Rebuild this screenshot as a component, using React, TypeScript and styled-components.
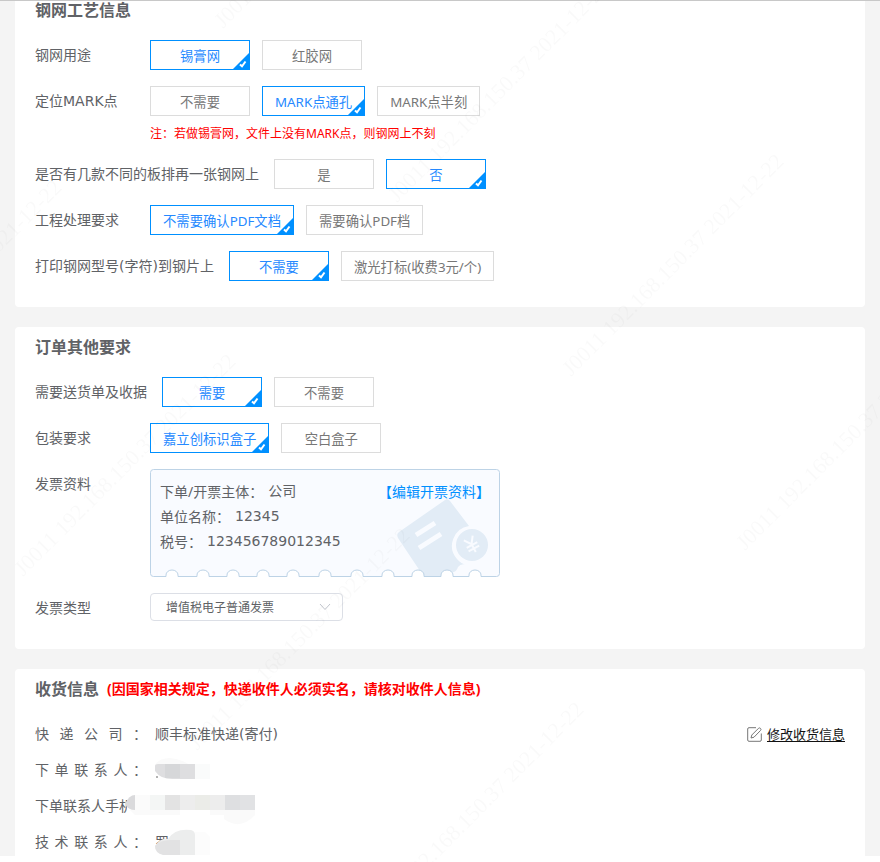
import React, { useState } from "react";
import styled, { createGlobalStyle } from "styled-components";

const GlobalStyle = createGlobalStyle`
  * { box-sizing: border-box; }
  body {
    margin: 0;
    background: #fff;
    color: #606266;
    font-family: "Noto Sans", "Noto Sans CJK SC", sans-serif;
    font-size: 14px;
    line-height: 20px;
  }
`;

const Page = styled.main`
  display: flex;
  flex-direction: column;
  gap: 20px;
  padding: 0 15px;
  background: #f4f4f4;
`;

const TopLine = styled.div`
  position: fixed;
  inset: 0 0 auto;
  height: 1px;
  background: #c8c8c8;
`;

const Card = styled.section<{ $place?: "first" | "last" }>`
  padding: ${(p) =>
    p.$place === "first" ? "0 20px 26px" : p.$place === "last" ? "10px 20px 4px" : "10px 20px 26px"};
  border-radius: ${(p) =>
    p.$place === "first" ? "0 0 4px 4px" : p.$place === "last" ? "4px 4px 0 0" : "4px"};
  background: #fff;
`;

const Title = styled.h2<{ $gap?: number }>`
  display: flex;
  align-items: center;
  gap: 8px;
  margin: 0 0 ${(p) => p.$gap ?? 20}px;
  font-size: 16px;
  font-weight: 700;
  line-height: 20px;
`;

const Warning = styled.span`
  color: #f00;
  font-size: 14px;
`;

const Rows = styled.div`
  display: flex;
  flex-direction: column;
  gap: 16px;
`;

const Row = styled.div`
  display: flex;
  align-items: flex-start;
  gap: 15px;
  min-height: 30px;
`;

const RowLabel = styled.label`
  min-width: 100px;
  font-family: "DejaVu Sans", "Noto Sans CJK SC", sans-serif;
  line-height: 30px;
  white-space: nowrap;
`;

const Options = styled.div`
  display: flex;
  flex-wrap: wrap;
  gap: 12px;
`;

const Option = styled.button<{ $on: boolean }>`
  position: relative;
  min-width: 100px;
  height: 30px;
  padding: 0 12px;
  border: 1px solid ${(p) => (p.$on ? "#0090ff" : "#dcdcdc")};
  background: #fff;
  color: ${(p) => (p.$on ? "#2589ff" : "#777")};
  font-family: inherit;
  white-space: nowrap;
  cursor: pointer;
`;

const Corner = styled.svg`
  position: absolute;
  right: 0;
  bottom: 0;
  width: 16px;
  height: 17px;
`;

const Note = styled.p`
  margin: 9px 0 0;
  color: #f00;
  font-size: 12px;
  line-height: 18px;
`;

const Invoice = styled.div`
  position: relative;
  width: 350px;
  height: 108px;
  padding: 10px;
  line-height: 25px;
`;

const InvoiceArt = styled.svg`
  position: absolute;
  inset: 0;
`;

const InvoiceLine = styled.div`
  position: relative;
  display: flex;
  gap: 5px;
`;

const InvoiceValue = styled.span`
  font-family: "DejaVu Sans", "Noto Sans CJK SC", sans-serif;
`;

const EditInvoice = styled.a`
  margin-left: auto;
  color: #0090ff;
  text-decoration: none;
`;

const SelectBox = styled.div`
  position: relative;
  width: 193px;
  height: 28px;
`;

const Select = styled.select`
  width: 100%;
  height: 100%;
  padding: 0 30px 0 15px;
  border: 1px solid #dcdfe6;
  border-radius: 4px;
  appearance: none;
  background: #fff;
  color: #606266;
  font-family: inherit;
  font-size: 12px;
`;

const Chevron = styled.svg`
  position: absolute;
  top: 10px;
  right: 12px;
  pointer-events: none;
`;

const Contact = styled.div`
  position: relative;
  display: flex;
  gap: 8px;
  height: 20px;
`;

const ContactLabel = styled.span`
  width: 112px;
  white-space: nowrap;
  text-align-last: justify;
`;

const PhoneLabel = styled(ContactLabel)`
  text-align-last: left;
`;

const ContactValue = styled.span`
  font-family: "DejaVu Sans", "Noto Sans CJK SC", sans-serif;
`;

const Mosaic = styled.svg`
  position: absolute;
  top: -5px;
  left: 90px;
`;

const EditAddress = styled.a`
  display: flex;
  align-items: center;
  gap: 5px;
  margin-left: auto;
  color: #111;
  font-size: 13px;
  text-decoration: underline;
  text-underline-offset: 2px;
`;

const WatermarkLayer = styled.div`
  position: fixed;
  inset: 0;
  overflow: hidden;
  pointer-events: none;
`;

const Mark = styled.span<{ $x: number; $y: number }>`
  position: absolute;
  left: ${(p) => p.$x}px;
  top: ${(p) => p.$y}px;
  color: rgba(0, 0, 0, 0.024);
  font-family: "Liberation Serif", serif;
  font-size: 22px;
  line-height: 22px;
  white-space: nowrap;
  transform: rotate(-45deg);
  transform-origin: 0 50%;
`;

function Choice({ label, items, initial, note }: { label: string; items: string[]; initial: number; note?: string }) {
  const [current, setCurrent] = useState(initial);
  return (
    <Row role="group" aria-label={label}>
      <RowLabel as="span">{label}</RowLabel>
      <div>
        <Options>
          {items.map((item, i) => (
            <Option key={item} type="button" $on={i === current} aria-pressed={i === current} onClick={() => setCurrent(i)}>
              {item}
              {i === current && (
                <Corner viewBox="0 0 16 17" aria-hidden="true">
                  <path d="M16 1V17H0Z" fill="#0090ff" />
                  <path d="M7 12.500 9 14.300 12.500 9.500" fill="none" stroke="#fff" strokeWidth="2" />
                </Corner>
              )}
            </Option>
          ))}
        </Options>
        {note && <Note>{note}</Note>}
      </div>
    </Row>
  );
}

const notches = [325, 297, 268, 238, 207, 175, 143, 113, 83, 53, 22];
const ticketPath =
  "M3.5 .5H346.5Q349.5 .5 349.5 3.5V104.500Q349.5 107.5 346.500 107.5" +
  notches.map((x) => `H${x + 6}V106A6 5 0 0 0 ${x - 6} 106V107.5`).join("") +
  "H3.5Q.5 107.5 .5 104.5V3.5Q.5 .5 3.5 .5Z";

function TicketArt() {
  return (
    <InvoiceArt width="350" height="108" viewBox="0 0 350 108" aria-hidden="true">
      <defs>
        <clipPath id="ticket">
          <path d={ticketPath} />
        </clipPath>
      </defs>
      <path d={ticketPath} fill="#f9fbff" />
      <g clipPath="url(#ticket)">
        <path
          d="M249 63 295 31Q298 29 300 32L319 57A20 20 0 0 0 307 90Q311 95 317 96Q311 94 308 98Q306 105 299 103Q293 102 291 108H274L248 69Q246 65 249 63Z"
          fill="#e2ecf6"
        />
        <circle cx="322" cy="76" r="16" fill="#e2ecf6" />
        <path d="M266 66 285 54M269 79 291 65" stroke="#f9fbff" strokeWidth="5" />
        <path
          d="M317 68 322 75 327 68M322 75V84M316 76H328M316 80H328"
          transform="rotate(-28 322 76)"
          fill="none"
          stroke="#f9fbff"
          strokeWidth="2"
        />
      </g>
      <path d={ticketPath} fill="none" stroke="#bdd3e6" />
    </InvoiceArt>
  );
}

function EditIcon() {
  return (
    <svg width="15" height="15" viewBox="0 0 15 15" fill="none" stroke="#777" aria-hidden="true">
      <path d="M9 .7H2Q.7 .7 .7 2V13Q.7 14.300 2 14.300H13Q14.300 14.300 14.300 13V6.500" />
      <path d="M4 11 4.800 8 11.500 1.300Q12.500 .4 13.500 1.400Q14.500 2.400 13.600 3.400L7 10.200Z" />
    </svg>
  );
}

const marks = [
  [218, 30],
  [392, 204],
  [566, 378],
  [740, 552],
  [-156, 404],
  [18, 578],
  [192, 752],
  [366, 926],
].map(([x, y]) => ({ x, y: y - 17 }));

export default function App() {
  return (
    <>
      <GlobalStyle />
      <Page>
        <Card $place="first">
          <Title>钢网工艺信息</Title>
          <Rows>
            <Choice label="钢网用途" items={["锡膏网", "红胶网"]} initial={0} />
            <Choice
              label="定位MARK点"
              items={["不需要", "MARK点通孔", "MARK点半刻"]}
              initial={1}
              note="注：若做锡膏网，文件上没有MARK点，则钢网上不刻"
            />
            <Choice label="是否有几款不同的板排再一张钢网上" items={["是", "否"]} initial={1} />
            <Choice label="工程处理要求" items={["不需要确认PDF文档", "需要确认PDF档"]} initial={0} />
            <Choice label="打印钢网型号(字符)到钢片上" items={["不需要", "激光打标(收费3元/个)"]} initial={0} />
          </Rows>
        </Card>

        <Card>
          <Title>订单其他要求</Title>
          <Rows>
            <Choice label="需要送货单及收据" items={["需要", "不需要"]} initial={0} />
            <Choice label="包装要求" items={["嘉立创标识盒子", "空白盒子"]} initial={0} />
            <Row>
              <RowLabel as="span">发票资料</RowLabel>
              <Invoice>
                <TicketArt />
                <InvoiceLine>
                  <span>下单/开票主体：</span>
                  <InvoiceValue>公司</InvoiceValue>
                  <EditInvoice href="#invoice">【编辑开票资料】</EditInvoice>
                </InvoiceLine>
                <InvoiceLine>
                  <span>单位名称：</span>
                  <InvoiceValue>12345</InvoiceValue>
                </InvoiceLine>
                <InvoiceLine>
                  <span>税号：</span>
                  <InvoiceValue>123456789012345</InvoiceValue>
                </InvoiceLine>
              </Invoice>
            </Row>
            <Row>
              <RowLabel htmlFor="invoice-type">发票类型</RowLabel>
              <SelectBox>
                <Select id="invoice-type">
                  <option>增值税电子普通发票</option>
                </Select>
                <Chevron width="12" height="8" viewBox="0 0 12 8" fill="none" stroke="#c0c4cc" aria-hidden="true">
                  <path d="M1 1 6 6.500 11 1" />
                </Chevron>
              </SelectBox>
            </Row>
          </Rows>
        </Card>

        <Card $place="last">
          <Title $gap={25}>
            收货信息
            <Warning>(因国家相关规定，快递收件人必须实名，请核对收件人信息)</Warning>
          </Title>
          <Rows>
            <Contact>
              <ContactLabel>快递公司：</ContactLabel>
              <ContactValue>顺丰标准快递(寄付)</ContactValue>
              <EditAddress href="#address">
                <EditIcon />
                修改收货信息
              </EditAddress>
            </Contact>
            <Contact>
              <ContactLabel>下单联系人：</ContactLabel>
              <Mosaic width="130" height="32" aria-hidden="true">
                <path d="M30 10Q34 3 45 3Q56 4 65 10Z" fill="#fafafa" />
                <path d="M31 12h3M31 22h2" stroke="#666" />
                <path d="M30 11Q30 9 33 9H70V24H50Q36 25 30 16Z" fill="#dedee0" />
                <path d="M40 9h15v14H40z" fill="#d6d7d9" />
                <path d="M70 9h15v15H70z" fill="#fafbfb" />
              </Mosaic>
            </Contact>
            <Contact>
              <PhoneLabel>下单联系人手机</PhoneLabel>
              <Mosaic width="130" height="36" aria-hidden="true">
                <path d="M2 4H12V26H2Z" fill="#fff" />
                <path d="M0 13Q4 4 10 4V19Q3 19 0 13Z" fill="#dadadc" />
                <path d="M10 4h15v15H10z" fill="#fbfbfb" />
                <path d="M25 4h15v15H25z" fill="#f4f6f5" />
                <path d="M40 4h15v15H40z" fill="#e3e3e3" />
                <path d="M55 4h15v15H55z" fill="#ededed" />
                <path d="M70 4h15v15H70z" fill="#ebece8" />
                <path d="M85 4h15v15H85z" fill="#ededed" />
                <path d="M100 4h15v15H100z" fill="#dedfe1" />
                <path d="M115 4h15v15H115z" fill="#e1e2e4" />
                <path d="M5 19H55V24H10ZM85 19H130V24Q115 40 99 28V24H85Z" fill="#fafafa" />
              </Mosaic>
            </Contact>
            <Contact>
              <ContactLabel>技术联系人：</ContactLabel>
              <span>罗</span>
              <Mosaic width="130" height="30" aria-hidden="true">
                <path d="M30 19Q36 10 43 12Q50 1 66 3Q70 4 70 8V28H40Q30 26 30 19Z" fill="#eceded" />
                <path d="M30 19Q35 13 45 13H55V28H38Q30 26 30 19Z" fill="#e2e2e3" />
                <path d="M70 5h10l5 5v18H70z" fill="#fcfcfc" />
              </Mosaic>
            </Contact>
          </Rows>
        </Card>
      </Page>
      <TopLine />
      <WatermarkLayer aria-hidden="true">
        {marks.map((m) => (
          <Mark key={`${m.x},${m.y}`} $x={m.x} $y={m.y}>
            J0011 192.168.150.37 2021-12-22
          </Mark>
        ))}
      </WatermarkLayer>
    </>
  );
}
